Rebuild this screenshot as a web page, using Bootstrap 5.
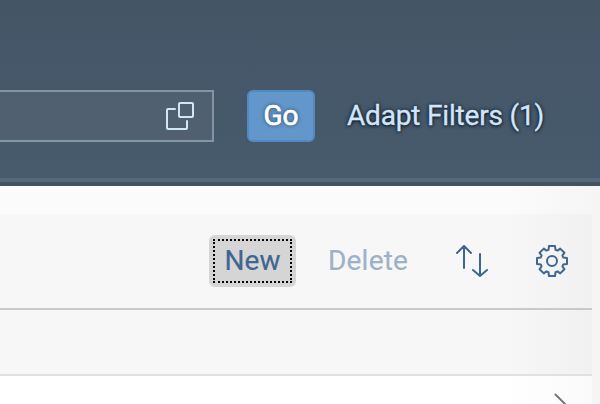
<!DOCTYPE html>
<html lang="en">
<head>
<meta charset="utf-8">
<meta name="viewport" content="width=device-width, initial-scale=1">
<title>List report</title>
<link href="https://cdn.jsdelivr.net/npm/bootstrap@5.3.0/dist/css/bootstrap.min.css" rel="stylesheet">
<style>
body{width:600px;height:404px;font-family:Roboto,"Noto Sans",sans-serif;font-size:28px;background:linear-gradient(90deg,#fbfbfb 510px,#f5f5f5);overflow:hidden}
.filter-bar{height:186px;padding-top:90px;background:linear-gradient(#445566,#475b6c 178px);box-shadow:inset 0 -4px #435262,inset 0 -8px #566879}
.filter-input{width:214px;height:52px;border:2px solid #8396a8;border-left:0;background:#506070;padding-right:18px}
.btn{--bs-btn-font-size:28px;--bs-btn-line-height:1;--bs-btn-padding-x:0;--bs-btn-padding-y:0;height:52px;white-space:nowrap;-webkit-text-stroke:.2px currentColor}
.btn-go{width:68px;margin-left:33px;background:#6397cb;border:2px solid #5389c1;border-radius:6px;color:#fff;text-shadow:0 0 4px #24384c;-webkit-text-stroke-width:.7px}
.btn-adapt{margin-left:32px;border:0;color:#d1e5fb;text-shadow:0 0 4px #0c1824,0 1px 3px #0c1824;letter-spacing:-.18px;-webkit-text-stroke-width:.35px}
.content-panel{width:592px;margin-top:28px;background:linear-gradient(90deg,#f7f7f7 500px,#f1f1f1)}
.tool-bar{height:96px;padding-top:21px;border-bottom:2px solid #c9c9c9}
.btn-new{width:87px;height:52px;margin-left:209px;padding:4px;border:0;border-radius:6px;background:#d5d5d5;color:#3f6690}
.btn-new span{border:2px dotted #000}
.btn-del,.btn-del:disabled{margin-left:32px;border:0;color:#9eb2c7;opacity:1;letter-spacing:.2px}
.tool-icons{margin:9px 23px 0 auto;gap:46px}
.head-row{height:66px;border-bottom:2px solid #e0e0e0}
.data-row{height:28px;background:linear-gradient(90deg,#fff 500px,#fafafa);padding:16px 18px 0 0}
.stroke-icon{fill:none;stroke:#3f6690;stroke-width:2;stroke-linecap:round;stroke-linejoin:round}
.field-icon{stroke:#d1e5fb}
</style>
<script src="https://cdn.jsdelivr.net/npm/bootstrap@5.3.0/dist/js/bootstrap.bundle.min.js"></script>
</head>
<body>
<header class="filter-bar d-flex align-items-start">
  <div class="filter-input d-flex align-items-center justify-content-end">
    <svg class="stroke-icon field-icon" width="28" height="28" viewBox="0 0 28 28"><rect x="13" y="1" width="14" height="14" rx="1"/><path d="M9 7H2Q1 7 1 8V26Q1 27 2 27H20Q21 27 21 26V19"/></svg>
  </div>
  <button class="btn btn-go">Go</button>
  <button class="btn btn-adapt">Adapt Filters (1)</button>
</header>
<main class="content-panel">
  <div class="tool-bar d-flex align-items-start">
    <button class="btn btn-new d-flex"><span class="w-100 h-100 d-flex align-items-center justify-content-center">New</span></button>
    <button class="btn btn-del" disabled>Delete</button>
    <div class="tool-icons d-flex align-items-center">
      <svg class="stroke-icon" width="34" height="34" viewBox="0 0 34 34"><path d="M9 24V2M2 9L9 2L16 9M25 10V32M18 26L25 32L32 26"/></svg>
      <svg class="stroke-icon" width="34" height="34" viewBox="-17 -17 34 34"><circle r="5"/><path d="M-3-15H3L3.5-11.2L5.5-10.4L8.2-12.4L12.4-8.2L10.4-5.5L11.2-3.5L15-3V3L11.2 3.5L10.4 5.5L12.4 8.2L8.2 12.4L5.5 10.4L3.5 11.2L3 15H-3L-3.5 11.2L-5.5 10.4L-8.2 12.4L-12.4 8.2L-10.4 5.5L-11.2 3.5L-15 3V-3L-11.2-3.5L-10.4-5.5L-12.4-8.2L-8.2-12.4L-5.5-10.4L-3.5-11.2Z"/></svg>
    </div>
  </div>
  <div class="head-row"></div>
  <div class="data-row d-flex justify-content-end"><svg width="20" height="24" viewBox="0 0 20 24" fill="none" stroke="#777" stroke-width="2"><path d="M1 2L13 14L1 26"/></svg></div>
</main>
</body>
</html>
